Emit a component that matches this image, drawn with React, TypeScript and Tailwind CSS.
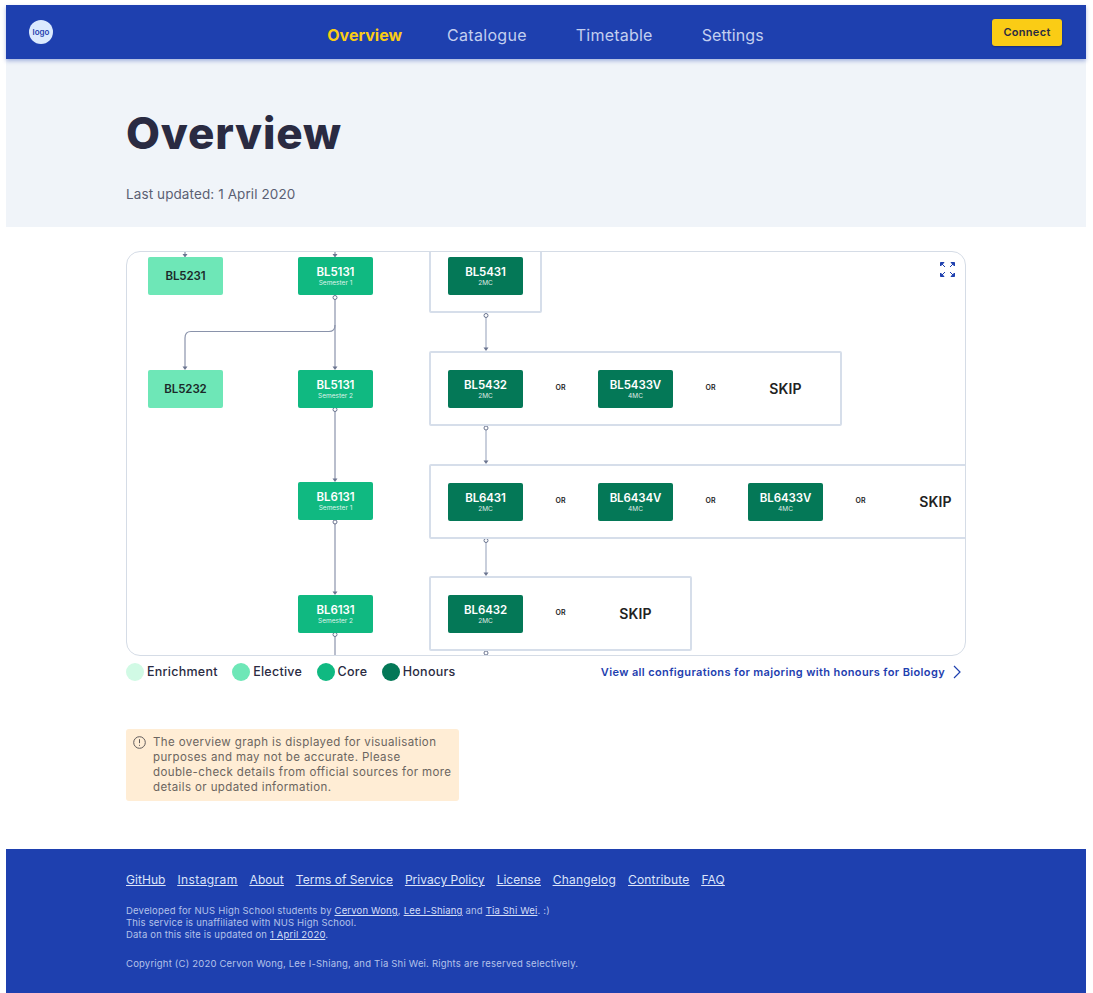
import React from "react";

function Node({ code, sub, kind, className }: { code: string; sub?: string; kind: "elective" | "core" | "honours"; className?: string }) {
  const bg = kind === "elective" ? "bg-[#6ee7b7] text-[#1b2a2a]" : kind === "core" ? "bg-[#10b981] text-white" : "bg-[#047857] text-white";
  return (
    <div className={`flex h-[38px] w-[75px] shrink-0 flex-col items-center justify-center rounded-[2px] ${bg} ${className ?? ""}`}>
      <div className="text-[11.5px] leading-[14px] font-semibold tracking-[-0.1px]">{code}</div>
      {sub && <div className="text-[6.5px] leading-[8px] font-normal opacity-85">{sub}</div>}
    </div>
  );
}

function Or() {
  return <div className="flex w-[75px] shrink-0 justify-center text-[7px] font-semibold text-[#222]">OR</div>;
}

function Skip() {
  return <div className="flex w-[75px] shrink-0 justify-center text-[14px] font-semibold tracking-[0.2px] text-[#222]">SKIP</div>;
}

function Dot({ x, y }: { x: number; y: number }) {
  return <circle cx={x} cy={y} r="2" fill="#fff" stroke="#6b7590" strokeWidth="1" />;
}

function Head({ x, y }: { x: number; y: number }) {
  return <path d={`M${x - 2.5} ${y - 3.5}H${x + 2.5}L${x} ${y}Z`} fill="#6b7590" />;
}

function Edges() {
  return (
    <svg className="absolute left-[-1px] top-[-1px]" width="840" height="405" viewBox="0 0 840 405" fill="none">
      <g stroke="#8a93ab" strokeWidth="1.2">
        <path d="M59 0V4" />
        <path d="M209 0V4" />
        <path d="M209 48V117" />
        <path d="M209 74Q209 80.5 203 80.5H65Q59 80.5 59 87V117" />
        <path d="M209 158V229" />
        <path d="M209 271V342" />
        <path d="M209 383V405" />
      </g>
      <g stroke="#bcc3d3" strokeWidth="1.6">
        <path d="M360 66V98" />
        <path d="M360 179V211" />
        <path d="M360 291V323" />
      </g>
      <Head x={59} y={6.5} />
      <Head x={209} y={6.5} />
      <Head x={59} y={119} />
      <Head x={209} y={119} />
      <Head x={209} y={231} />
      <Head x={209} y={344} />
      <Head x={360} y={100} />
      <Head x={360} y={213} />
      <Head x={360} y={325} />
      <Dot x={209} y={46.5} />
      <Dot x={209} y={158.5} />
      <Dot x={209} y={271} />
      <Dot x={209} y={383.5} />
      <Dot x={360} y={64.5} />
      <Dot x={360} y={177} />
      <Dot x={360} y={289.5} />
      <Dot x={360} y={402} />
    </svg>
  );
}

function ExpandIcon() {
  return (
    <svg className="absolute right-[10px] top-[10px]" width="15" height="15" viewBox="0 0 15 15" fill="#1e40af" stroke="#1e40af" strokeWidth="1">
      <path d="M0.5 0.5H4L0.5 4Z" />
      <path d="M1.5 1.5L5 5" />
      <path d="M14.5 0.5H11L14.5 4Z" />
      <path d="M13.5 1.5L10 5" />
      <path d="M0.5 14.5H4L0.5 11Z" />
      <path d="M1.5 13.5L5 10" />
      <path d="M14.5 14.5H11L14.5 11Z" />
      <path d="M13.5 13.5L10 10" />
    </svg>
  );
}

function Box({ className, children }: { className: string; children: React.ReactNode }) {
  return (
    <div className={`absolute flex h-[75px] items-center rounded-[2px] border-2 border-[#d6deea] bg-white pl-[17px] ${className}`}>
      {children}
    </div>
  );
}

function Graph() {
  return (
    <div className="relative h-[405px] w-[840px] overflow-hidden rounded-[14px] border border-[#d5dce6]">
      <Edges />
      <Node kind="elective" code="BL5231" className="absolute left-[21px] top-[5px]" />
      <Node kind="core" code="BL5131" sub="Semester 1" className="absolute left-[171px] top-[5px]" />
      <Node kind="elective" code="BL5232" className="absolute left-[21px] top-[118px]" />
      <Node kind="core" code="BL5131" sub="Semester 2" className="absolute left-[171px] top-[118px]" />
      <Node kind="core" code="BL6131" sub="Semester 1" className="absolute left-[171px] top-[230px]" />
      <Node kind="core" code="BL6131" sub="Semester 2" className="absolute left-[171px] top-[343px]" />
      <Box className="left-[302px] top-[-14px] w-[113px]">
        <Node kind="honours" code="BL5431" sub="2MC" />
      </Box>
      <Box className="left-[302px] top-[99px] w-[413px]">
        <Node kind="honours" code="BL5432" sub="2MC" />
        <Or />
        <Node kind="honours" code="BL5433V" sub="4MC" />
        <Or />
        <Skip />
      </Box>
      <Box className="left-[302px] top-[212px] w-[563px]">
        <Node kind="honours" code="BL6431" sub="2MC" />
        <Or />
        <Node kind="honours" code="BL6434V" sub="4MC" />
        <Or />
        <Node kind="honours" code="BL6433V" sub="4MC" />
        <Or />
        <Skip />
      </Box>
      <Box className="left-[302px] top-[324px] w-[263px]">
        <Node kind="honours" code="BL6432" sub="2MC" />
        <Or />
        <Skip />
      </Box>
      <ExpandIcon />
    </div>
  );
}

function Legend({ color, label }: { color: string; label: string }) {
  return (
    <div className="flex items-center gap-[3px]">
      <span className={`h-[18px] w-[18px] rounded-full ${color}`} />
      <span className="text-[12.5px] font-medium tracking-[0.25px] text-[#2a2b42]">{label}</span>
    </div>
  );
}

const footerLinks = [
  { label: "GitHub", cls: "tracking-[0.05px]" },
  { label: "Instagram", cls: "tracking-[0.4px]" },
  { label: "About", cls: "tracking-[0.08px]" },
  { label: "Terms of Service", cls: "tracking-[0.03px]" },
  { label: "Privacy Policy", cls: "tracking-[0.02px]" },
  { label: "License", cls: "tracking-[0.02px]" },
  { label: "Changelog", cls: "tracking-[0.2px]" },
  { label: "Contribute", cls: "tracking-[0.15px]" },
  { label: "FAQ", cls: "tracking-[0.08px]" },
];

export default function App() {
  return (
    <div className="pl-[6px] pr-[7px] pt-[5px] font-['Inter',sans-serif]">
      <header className="relative z-10 grid h-[54px] grid-cols-[1fr_auto_1fr] items-center bg-[#1e40af] pl-[23px] pr-[24px] shadow-[0_2px_4px_rgba(30,64,175,0.35)]">
        <div className="flex h-[24px] w-[24px] items-center justify-center rounded-full bg-[#dbeafe] text-[8px] font-semibold text-[#1e40af]">logo</div>
        <nav className="flex gap-[49px] pt-[6px] text-[16px]">
          <a className="mr-[-4px] font-bold text-[#facc15]">Overview</a>
          <a className="tracking-[0.3px] text-[#c3cfef]">Catalogue</a>
          <a className="tracking-[0.22px] text-[#c3cfef]">Timetable</a>
          <a className="tracking-[0.1px] text-[#c3cfef]">Settings</a>
        </nav>
        <button className="ml-auto flex h-[27px] w-[70px] items-center justify-center rounded-[3px] bg-[#facc15] text-[11px] font-semibold tracking-[0.3px] text-[#2a2b42] shadow-[0_1px_2px_rgba(0,0,0,0.3)]">Connect</button>
      </header>

      <section className="h-[168px] bg-[#f0f4f9] pl-[120px] pt-[46px]">
        <h1 className="text-[44px] leading-[56px] font-extrabold tracking-[0.8px] text-[#2a2b42]">Overview</h1>
        <p className="mt-[23px] text-[13.5px] leading-[20px] tracking-[0.1px] text-[#5b5f73]">Last updated: 1 April 2020</p>
      </section>

      <main className="pl-[120px] pt-[24px]">
        <Graph />
        <div className="mt-[7px] flex h-[18px] w-[840px] items-center justify-between">
          <div className="flex gap-[14.5px]">
            <Legend color="bg-[#d1fae5]" label="Enrichment" />
            <Legend color="bg-[#6ee7b7]" label="Elective" />
            <Legend color="bg-[#10b981]" label="Core" />
            <Legend color="bg-[#047857]" label="Honours" />
          </div>
          <a className="flex items-center gap-[8px] pr-[5px] text-[11px] font-semibold tracking-[0.37px] text-[#1e40af]">
            View all configurations for majoring with honours for Biology
            <svg width="8" height="14" viewBox="0 0 8 14" fill="none" stroke="#1e40af" strokeWidth="1.2">
              <path d="M1 1L7 7L1 13" />
            </svg>
          </a>
        </div>

        <div className="mt-[48px] flex h-[72px] w-[333px] gap-[7px] rounded-[3px] bg-[#ffedd5] pl-[7px] pt-[6px]">
          <svg className="mt-[1px] shrink-0" width="13" height="13" viewBox="0 0 13 13" fill="none" stroke="#5f5a5a" strokeWidth="1">
            <circle cx="6.5" cy="6.5" r="5.8" />
            <path d="M6.5 3.2V7.2" />
            <path d="M6.5 8.8V9.8" />
          </svg>
          <p className="text-[11.5px] leading-[15px] tracking-[0.39px] text-[#6b6560]">
            The overview graph is displayed for visualisation
            <br />
            purposes and may not be accurate. Please
            <br />
            double-check details from official sources for more
            <br />
            details or updated information.
          </p>
        </div>
      </main>

      <footer className="mt-[48px] h-[144px] bg-[#1e40af] pl-[120px] pt-[23px]">
        <div className="flex gap-[12px] text-[12px] leading-[16px] text-[#dbe4fa] underline">
          {footerLinks.map((l) => (
            <a key={l.label} className={l.cls}>{l.label}</a>
          ))}
        </div>
        <div className="mt-[17px] text-[9.5px] leading-[12px] tracking-[0.18px] text-[#b4c2ea]">
          <p>
            Developed for NUS High School students by <a className="text-[#d5dff7] underline">Cervon Wong</a>, <a className="text-[#d5dff7] underline">Lee I-Shiang</a> and <a className="text-[#d5dff7] underline">Tia Shi Wei</a>. :)
          </p>
          <p>This service is unaffiliated with NUS High School.</p>
          <p>
            Data on this site is updated on <a className="text-[#d5dff7] underline">1 April 2020</a>.
          </p>
          <p className="mt-[17px] tracking-[0.2px]">Copyright (C) 2020 Cervon Wong, Lee I-Shiang, and Tia Shi Wei. Rights are reserved selectively.</p>
        </div>
      </footer>
    </div>
  );
}
